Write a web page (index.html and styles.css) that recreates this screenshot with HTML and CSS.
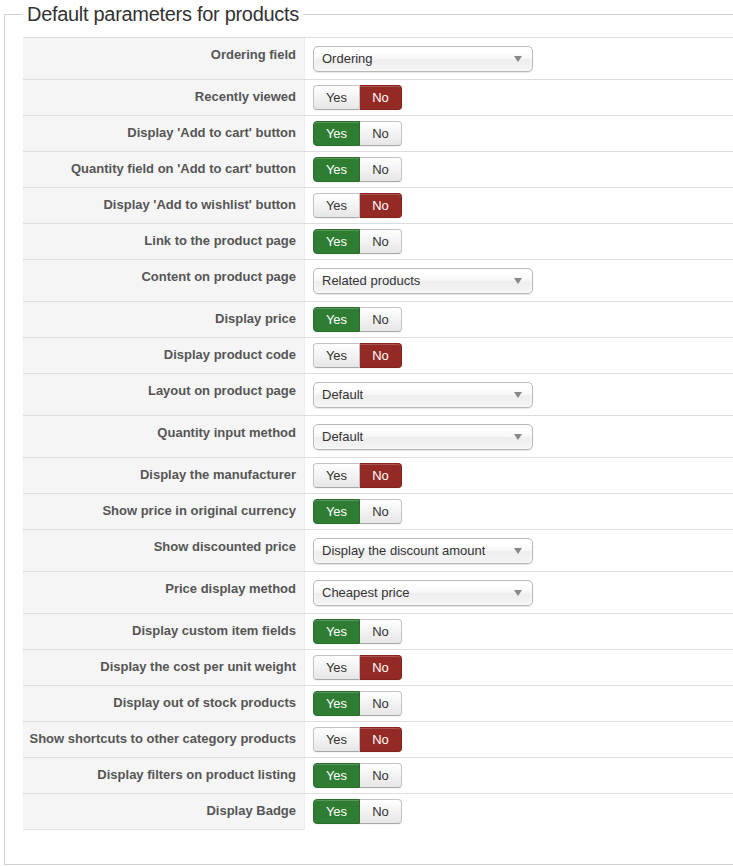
FILE: index.html
```html
<!DOCTYPE html>
<html>
<head>
<meta charset="utf-8">
<link rel="stylesheet" href="styles.css">
</head>
<body>
<fieldset class="panel">
  <legend class="panel-title">Default parameters for products</legend>
  <div class="form">
    <div class="row row-select"><div class="label">Ordering field</div><div class="value"><div class="select"><span>Ordering</span><i class="arrow"></i></div></div></div>
    <div class="row"><div class="label">Recently viewed</div><div class="value"><div class="toggle"><span class="btn yes">Yes</span><span class="btn no on-no">No</span></div></div></div>
    <div class="row"><div class="label">Display 'Add to cart' button</div><div class="value"><div class="toggle"><span class="btn yes on-yes">Yes</span><span class="btn no">No</span></div></div></div>
    <div class="row"><div class="label">Quantity field on 'Add to cart' button</div><div class="value"><div class="toggle"><span class="btn yes on-yes">Yes</span><span class="btn no">No</span></div></div></div>
    <div class="row"><div class="label">Display 'Add to wishlist' button</div><div class="value"><div class="toggle"><span class="btn yes">Yes</span><span class="btn no on-no">No</span></div></div></div>
    <div class="row"><div class="label">Link to the product page</div><div class="value"><div class="toggle"><span class="btn yes on-yes">Yes</span><span class="btn no">No</span></div></div></div>
    <div class="row row-select"><div class="label">Content on product page</div><div class="value"><div class="select"><span>Related products</span><i class="arrow"></i></div></div></div>
    <div class="row"><div class="label">Display price</div><div class="value"><div class="toggle"><span class="btn yes on-yes">Yes</span><span class="btn no">No</span></div></div></div>
    <div class="row"><div class="label">Display product code</div><div class="value"><div class="toggle"><span class="btn yes">Yes</span><span class="btn no on-no">No</span></div></div></div>
    <div class="row row-select"><div class="label">Layout on product page</div><div class="value"><div class="select"><span>Default</span><i class="arrow"></i></div></div></div>
    <div class="row row-select"><div class="label">Quantity input method</div><div class="value"><div class="select"><span>Default</span><i class="arrow"></i></div></div></div>
    <div class="row"><div class="label">Display the manufacturer</div><div class="value"><div class="toggle"><span class="btn yes">Yes</span><span class="btn no on-no">No</span></div></div></div>
    <div class="row"><div class="label">Show price in original currency</div><div class="value"><div class="toggle"><span class="btn yes on-yes">Yes</span><span class="btn no">No</span></div></div></div>
    <div class="row row-select"><div class="label">Show discounted price</div><div class="value"><div class="select"><span>Display the discount amount</span><i class="arrow"></i></div></div></div>
    <div class="row row-select"><div class="label">Price display method</div><div class="value"><div class="select"><span>Cheapest price</span><i class="arrow"></i></div></div></div>
    <div class="row"><div class="label">Display custom item fields</div><div class="value"><div class="toggle"><span class="btn yes on-yes">Yes</span><span class="btn no">No</span></div></div></div>
    <div class="row"><div class="label">Display the cost per unit weight</div><div class="value"><div class="toggle"><span class="btn yes">Yes</span><span class="btn no on-no">No</span></div></div></div>
    <div class="row"><div class="label">Display out of stock products</div><div class="value"><div class="toggle"><span class="btn yes on-yes">Yes</span><span class="btn no">No</span></div></div></div>
    <div class="row"><div class="label">Show shortcuts to other category products</div><div class="value"><div class="toggle"><span class="btn yes">Yes</span><span class="btn no on-no">No</span></div></div></div>
    <div class="row"><div class="label">Display filters on product listing</div><div class="value"><div class="toggle"><span class="btn yes on-yes">Yes</span><span class="btn no">No</span></div></div></div>
    <div class="row row-last"><div class="label">Display Badge</div><div class="value"><div class="toggle"><span class="btn yes on-yes">Yes</span><span class="btn no">No</span></div></div></div>
  </div>
</fieldset>
</body>
</html>
```
FILE: styles.css
```css
html, body {
  margin: 0;
  padding: 0;
  background: #fff;
  overflow: hidden;
}
body {
  font-family: "Liberation Sans", Arial, Helvetica, sans-serif;
  font-size: 13px;
  color: #333;
}
.panel {
  margin: 2px 0 0 4px;
  padding: 11px 0 34px 18px;
  border: 1px solid #d0d0d0;
  width: 710px;
  min-width: 0;
  box-sizing: content-box;
}
.panel-title {
  padding: 0 4px;
  font-size: 20px;
  letter-spacing: -0.3px;
  line-height: 24px;
  color: #333;
}
.form {
  width: 710px;
  display: flex;
  flex-direction: column;
}
.row {
  display: flex;
  border-top: 1px solid #ddd;
  height: 35px;
}
.row-select {
  height: 41px;
}
.label {
  width: 282px;
  flex: none;
  box-sizing: border-box;
  background: #f5f5f5;
  border-right: 1px solid #eee;
  text-align: right;
  padding: 8px 8px 0 0;
  line-height: 18px;
  font-weight: bold;
  color: #555;
}
.row-last .label {
  border-bottom: 1px solid #e6e6e6;
}
.row-last {
  height: 36px;
}
.value {
  flex: 1;
  padding: 5px 0 0 8px;
}
.row-select .value {
  padding-top: 8px;
}
.toggle {
  display: flex;
  height: 25px;
  width: 89px;
}
.btn {
  display: flex;
  align-items: center;
  justify-content: center;
  box-sizing: border-box;
  height: 25px;
  font-size: 13px;
  color: #333;
  background: linear-gradient(#ffffff, #e6e6e6);
  border: 1px solid #c4c4c4;
  border-bottom-color: #a8a8a8;
  box-shadow: inset 0 1px 0 rgba(255,255,255,.2), 0 1px 2px rgba(0,0,0,.05);
}
.yes {
  width: 47px;
  border-radius: 4px 0 0 4px;
}
.no {
  width: 42px;
  border-left: none;
  border-radius: 0 4px 4px 0;
}
.on-yes {
  background: #2f7d32;
  border-color: #2a6e2c;
  color: #fff;
}
.on-no {
  background: #942a25;
  border-color: #84241f;
  color: #fff;
}
.select {
  width: 220px;
  height: 26px;
  box-sizing: border-box;
  display: flex;
  align-items: center;
  padding: 0 10px 1px 8px;
  border: 1px solid #b8b8b8;
  border-radius: 5px;
  background: linear-gradient(#ffffff 20%, #f6f6f6 50%, #eeeeee 52%, #f4f4f4 100%);
  box-shadow: inset 0 0 3px #fff, 0 1px 1px rgba(0,0,0,.1);
  color: #333;
  font-size: 13px;
}
.select span {
  flex: 1;
}
.arrow {
  width: 0;
  height: 0;
  border-left: 4px solid transparent;
  border-right: 4px solid transparent;
  border-top: 6px solid #888;
}
```
